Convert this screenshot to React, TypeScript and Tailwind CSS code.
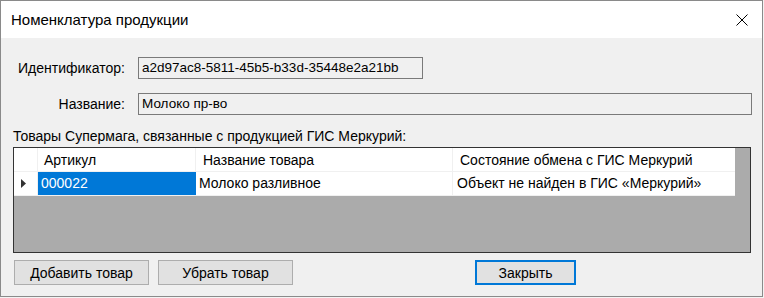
import React from 'react';

const font = { fontFamily: '"Segoe UI", "Liberation Sans", Arial, sans-serif' };

const Field = ({ label, value, wide }: { label: string; value: string; wide?: boolean }) => (
  <div className="flex items-center">
    <div className="w-[125px] pr-[1px] text-right text-black">{label}</div>
    <div
      className={`ml-[12px] h-[22px] border border-[#7a7a7a] bg-[#f0f0f0] pl-[3px] leading-[20px] text-black text-[13.5px] ${
        wide ? 'w-[614px]' : 'w-[285px]'
      }`}
    >
      {value}
    </div>
  </div>
);

const Button = ({ children, primary, className }: { children: React.ReactNode; primary?: boolean; className?: string }) => (
  <button
    className={`h-[25px] bg-[#e1e1e1] text-black leading-[20px] ${
      primary ? 'border-2 border-[#0078d7]' : 'border border-[#adadad]'
    } ${className ?? ''}`}
  >
    {children}
  </button>
);

export default function App() {
  return (
    <div className="w-[764px] h-[298px] bg-[#f3f3f3] text-[14px]" style={font}>
      <div className="w-[763px] h-[297px] border border-[#8a8a8a] bg-[#f0f0f0] flex flex-col">
        {/* title bar */}
        <div className="h-[37px] bg-white flex items-center justify-between pl-[10px] pr-[13px]">
          <span className="text-[15px] text-black pt-[2px]">Номенклатура продукции</span>
          <svg width="12" height="12" viewBox="0 0 12 12" className="mr-[1px]">
            <path d="M0.5 0.5 L11.5 11.5 M11.5 0.5 L0.5 11.5" stroke="#000" strokeWidth="1" />
          </svg>
        </div>

        <div className="flex flex-col pt-[19px]">
          <Field label="Идентификатор:" value="a2d97ac8-5811-45b5-b33d-35448e2a21bb" />
          <div className="h-[14px]" />
          <Field label="Название:" value="Молоко пр-во" wide />

          <div className="mt-[12px] pl-[12px] leading-[18px] text-black">
            Товары Супермага, связанные с продукцией ГИС Меркурий:
          </div>

          {/* grid */}
          <div className="ml-[12px] mt-[2px] w-[738px] h-[106px] border border-[#333] bg-[#ababab]">
            <div className="flex h-[24px] w-[721px] bg-white border-b border-[#f0f0f0]">
              <div className="w-[24px] border-r border-[#f0f0f0]" />
              <div className="w-[158px] pl-[6px] leading-[24px] border-r border-[#f0f0f0]">Артикул</div>
              <div className="w-[257px] pl-[7px] leading-[24px] border-r border-[#f0f0f0]">Название товара</div>
              <div className="flex-1 pl-[7px] leading-[24px]">Состояние обмена с ГИС Меркурий</div>
            </div>
            <div className="flex h-[24px] w-[721px] bg-white border-b border-[#f0f0f0]">
              <div className="w-[24px] border-r border-[#f0f0f0] flex items-center pl-[7px]">
                <svg width="5" height="9" viewBox="0 0 5 9">
                  <path d="M0 0 L5 4.5 L0 9 Z" fill="#333" />
                </svg>
              </div>
              <div className="w-[158px] pl-[3px] leading-[23px] bg-[#0078d7] text-white">000022</div>
              <div className="w-[257px] pl-[3px] leading-[23px] border-r border-[#f0f0f0]">Молоко разливное</div>
              <div className="flex-1 pl-[4px] leading-[23px]">Объект не найден в ГИС «Меркурий»</div>
            </div>
          </div>

          {/* buttons */}
          <div className="flex mt-[7px] pl-[13px]">
            <Button className="w-[135px]">Добавить товар</Button>
            <Button className="w-[135px] ml-[9px]">Убрать товар</Button>
            <Button primary className="w-[101px] ml-[182px]">Закрыть</Button>
          </div>
        </div>
      </div>
    </div>
  );
}
